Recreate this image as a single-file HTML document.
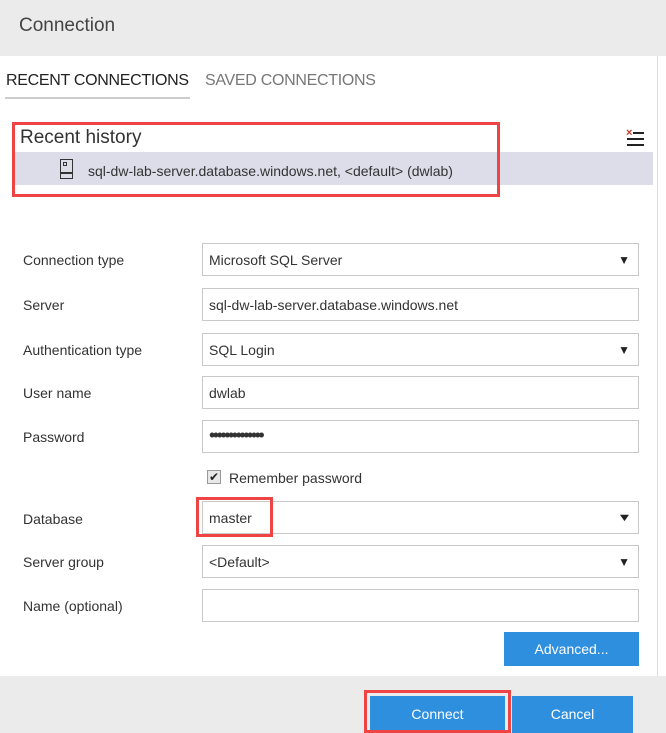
<!DOCTYPE html><html><head><style>
*{box-sizing:border-box;margin:0;padding:0}
body{width:666px;height:733px;overflow:hidden;background:#fff;font-family:"Liberation Sans",sans-serif;position:relative;color:#333}
.a{position:absolute}
.hdr{left:0;top:0;width:666px;height:56px;background:#ebebeb}
.lbl{left:23px;font-size:14px;color:#333}
.inp{left:202px;width:437px;height:33px;border:1px solid #c8c8c8;background:#fff;font-size:14px;padding:8px 6px;color:#333}
.arr{position:absolute;right:8px;top:9px;font-size:12px;color:#222}
.red{border:3px solid #ef4444}
.btn{background:#2f8fdf;color:#fff;font-size:14px;text-align:center}
</style></head><body>
<div class="a hdr"></div>
<div class="a" style="left:19px;top:15px;font-size:19px;color:#444">Connection</div>
<div class="a" style="left:657px;top:56px;width:1px;height:620px;background:#ddd"></div>
<div class="a" style="left:6px;top:72px;font-size:16px;color:#222;letter-spacing:-0.3px">RECENT CONNECTIONS</div>
<div class="a" style="left:205px;top:72px;font-size:16px;color:#777;letter-spacing:-0.3px">SAVED CONNECTIONS</div>
<div class="a" style="left:5px;top:97px;width:185px;height:2px;background:#ccc"></div>
<div class="a" style="left:15px;top:152px;width:638px;height:33px;background:#dcdde8"></div>
<div class="a" style="left:20px;top:127px;font-size:19px;color:#333">Recent history</div>
<div class="a" style="left:60px;top:159px;width:13px;height:20px;border:1.5px solid #333"></div>
<div class="a" style="left:63px;top:162px;width:4px;height:4px;border:1px solid #333"></div>
<div class="a" style="left:60px;top:172px;width:13px;height:1.5px;background:#333"></div>
<div class="a" style="left:88px;top:163px;font-size:14px;color:#333">sql-dw-lab-server.database.windows.net, &lt;default&gt; (dwlab)</div>
<div class="a red" style="left:12px;top:122px;width:488px;height:75px"></div>
<div class="a" style="left:626px;top:127px;color:#c0392b;font-size:11px;font-weight:bold">×</div>
<div class="a" style="left:633px;top:132px;width:11px;height:2px;background:#222"></div>
<div class="a" style="left:627px;top:138px;width:17px;height:2px;background:#222"></div>
<div class="a" style="left:627px;top:144px;width:17px;height:2px;background:#222"></div>

<div class="a lbl" style="top:252px">Connection type</div>
<div class="a inp" style="top:243px">Microsoft SQL Server<span class="arr">▼</span></div>
<div class="a lbl" style="top:297px">Server</div>
<div class="a inp" style="top:288px">sql-dw-lab-server.database.windows.net</div>
<div class="a lbl" style="top:342px">Authentication type</div>
<div class="a inp" style="top:333px">SQL Login<span class="arr">▼</span></div>
<div class="a lbl" style="top:385px">User name</div>
<div class="a inp" style="top:376px">dwlab</div>
<div class="a lbl" style="top:429px">Password</div>
<div class="a inp" style="top:420px;font-size:18px;padding-top:4px;letter-spacing:-2.5px">••••••••••••••</div>
<div class="a" style="left:207px;top:470px;width:14px;height:14px;border:1px solid #999;background:#e8e8e8;font-size:12px;line-height:12px;text-align:center;color:#222">✔</div>
<div class="a" style="left:229px;top:470px;font-size:14px">Remember password</div>
<div class="a lbl" style="top:511px">Database</div>
<div class="a inp" style="top:501px">master<span class="arr" style="font-size:11px;top:10px;transform:scaleX(1.4)">▼</span></div>
<div class="a red" style="left:196px;top:497px;width:77px;height:40px"></div>
<div class="a lbl" style="top:554px">Server group</div>
<div class="a inp" style="top:545px">&lt;Default&gt;<span class="arr">▼</span></div>
<div class="a lbl" style="top:598px">Name (optional)</div>
<div class="a inp" style="top:589px"></div>
<div class="a btn" style="left:504px;top:632px;width:135px;height:34px;line-height:34px">Advanced...</div>
<div class="a" style="left:0;top:676px;width:666px;height:57px;background:#ebebeb"></div>
<div class="a btn" style="left:370px;top:696px;width:135px;height:37px;line-height:37px">Connect</div>
<div class="a red" style="left:364px;top:690px;width:147px;height:43px"></div>
<div class="a btn" style="left:512px;top:696px;width:121px;height:37px;line-height:37px">Cancel</div>
</body></html>
